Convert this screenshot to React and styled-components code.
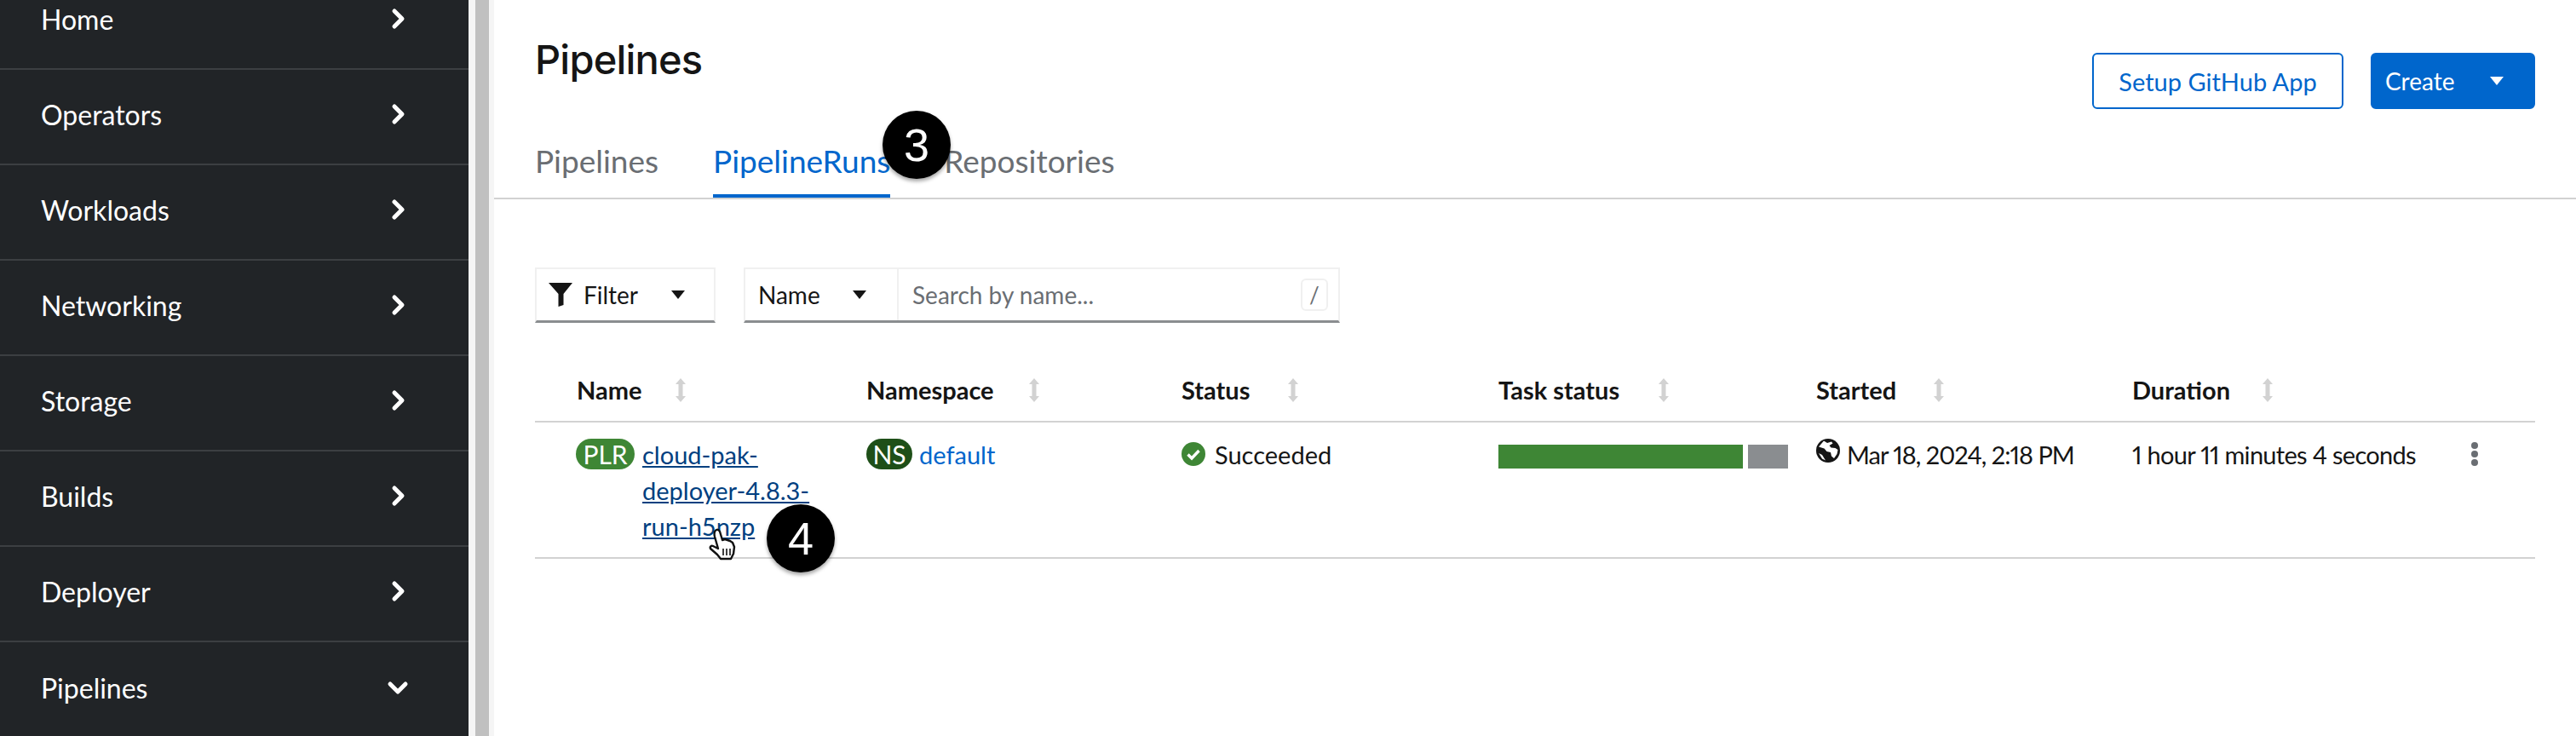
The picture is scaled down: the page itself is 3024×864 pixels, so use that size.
import styled, { createGlobalStyle } from "styled-components"

const GlobalStyle = createGlobalStyle`
  html, body {
    margin: 0;
    padding: 0;
    background: #fff;
  }
  * {
    box-sizing: border-box;
  }
`

const Page = styled.div`
  position: relative;
  display: flex;
  width: 3024px;
  height: 864px;
  overflow: hidden;
  background: #fff;
  font-family: "Lato", "Liberation Sans", sans-serif;
  color: #151515;
`

const Sidebar = styled.nav`
  flex: 0 0 550px;
  height: 864px;
  overflow: hidden;
  background: #212427;
`

const NavList = styled.ul`
  list-style: none;
  margin: -30px 0 0;
  padding: 0;
`

const NavItem = styled.li`
  display: flex;
  align-items: center;
  justify-content: space-between;
  height: 112px;
  padding: 0 70px 6px 48px;
  border-bottom: 2px solid #3c3f42;
  color: #fff;
  font-size: 32px;

  &:last-child {
    border-bottom: 0;
  }
`

const Gutter = styled.div`
  flex: 0 0 30px;
  display: flex;
  background: #f5f5f5;
  padding-left: 8px;

  &::before {
    content: "";
    width: 16px;
    background: #c0c0c0;
  }
`

const Main = styled.main`
  flex: 1;
  min-width: 0;
  background: #fff;
`

const Header = styled.header`
  display: flex;
  justify-content: space-between;
  align-items: flex-start;
  height: 130px;
  padding: 0 48px;
`

const Title = styled.h1`
  margin: 42px 0 0;
  font-family: "Inter", "Liberation Sans", sans-serif;
  font-size: 47px;
  line-height: 56px;
  font-weight: 500;
  letter-spacing: -0.8px;
  color: #151515;
`

const Actions = styled.div`
  display: flex;
  gap: 32px;
  margin-top: 62px;
`

const Button = styled.button`
  display: flex;
  align-items: center;
  height: 66px;
  border-radius: 6px;
  font: inherit;
  font-size: ${(p) => (p.$primary ? "28px" : "29px")};
  border: 2px solid #06c;
  background: ${(p) => (p.$primary ? "#06c" : "#fff")};
  color: ${(p) => (p.$primary ? "#fff" : "#06c")};
  width: ${(p) => (p.$primary ? "193px" : "295px")};
  padding: ${(p) => (p.$primary ? "0 0 0 15px" : "0")};
  justify-content: ${(p) => (p.$primary ? "flex-start" : "center")};
  gap: 40px;
`

const Tabs = styled.div`
  display: flex;
  height: 104px;
  padding-left: 48px;
  border-bottom: 2px solid #d2d2d2;
`

const Tab = styled.div`
  height: 102px;
  display: flex;
  align-items: center;
  padding-top: 18px;
  font-size: 37px;
  margin-right: ${(p) => p.$gap}px;
  color: ${(p) => (p.$active ? "#06c" : "#6a6e73")};
  border-bottom: 4px solid ${(p) => (p.$active ? "#06c" : "transparent")};
`

const Toolbar = styled.div`
  display: flex;
  gap: 33px;
  margin: 80px 0 0 48px;
  height: 65px;
`

const FieldGroup = styled.div`
  display: flex;
  height: 65px;
  border: 2px solid #f0f0f0;
  border-bottom: 3px solid #8a8d90;
  font-size: 28px;
`

const FilterField = styled.div`
  display: flex;
  align-items: center;
  width: ${(p) => p.$width}px;
  padding-left: ${(p) => p.$pad}px;
  gap: ${(p) => p.$gap}px;
`

const NameSelect = styled(FilterField)`
  border-right: 2px solid #f0f0f0;
  justify-content: flex-start;
`

const CaretSpacer = styled.span`
  width: 12px;
`

const SearchField = styled.div`
  display: flex;
  align-items: center;
  justify-content: space-between;
  width: 516px;
  padding: 0 12px 0 16px;
  color: #6a6e73;
`

const Kbd = styled.span`
  display: flex;
  align-items: center;
  justify-content: center;
  width: 32px;
  height: 38px;
  border: 2px solid #f0f0f0;
  border-radius: 6px;
  color: #6a6e73;
  font-size: 26px;
`

const Table = styled.div`
  display: grid;
  grid-template-columns: 389px 370px 372px 373px 371px 380px 93px;
  margin: 46px 48px 0;
`

const HeadCell = styled.div`
  display: flex;
  align-items: center;
  height: 71px;
  padding-left: ${(p) => p.$pad || 0}px;
  padding-bottom: 4px;
  border-bottom: 2px solid #d2d2d2;
  font-size: 29px;
  font-weight: 700;
  gap: ${(p) => p.$gap}px;
`

const Cell = styled.div`
  height: 160px;
  padding-top: 17px;
  padding-left: ${(p) => p.$pad || 0}px;
  border-bottom: 2px solid #d2d2d2;
  font-size: 29px;
  line-height: 42px;
  display: flex;
  align-items: flex-start;
  gap: ${(p) => p.$gap || 0}px;
`

const Tag = styled.span`
  flex: none;
  display: inline-flex;
  align-items: center;
  justify-content: center;
  height: 36px;
  margin-top: 2px;
  width: ${(p) => p.$width}px;
  border-radius: 18px;
  color: #fff;
  font-size: 30px;
  line-height: 36px;
  background: ${(p) => p.$color};
`

const RunLink = styled.a`
  width: 220px;
  color: #004080;
  text-decoration: underline;
`

const NamespaceLink = styled.a`
  color: #06c;
`

const NumericText = styled.span`
  font-variant-numeric: proportional-nums;
  letter-spacing: ${(p) => p.$spacing}px;
  white-space: nowrap;
`

const TaskBar = styled.div`
  display: flex;
  gap: 6px;
  width: 340px;
  height: 28px;
  margin-top: 9px;
`

const TaskSegment = styled.div`
  height: 28px;
  width: ${(p) => p.$width}px;
  background: ${(p) => p.$color};
`

const Marker = styled.div`
  position: absolute;
  left: ${(p) => p.$x}px;
  top: ${(p) => p.$y}px;
  width: 80px;
  height: 80px;
  border-radius: 50%;
  background: #000;
  color: #fff;
  display: flex;
  align-items: center;
  justify-content: center;
  font-family: "Liberation Sans", Arial, sans-serif;
  font-size: 54px;
  box-shadow: 0 3px 4px rgba(0, 0, 0, 0.35);
`

const HandCursor = styled.svg`
  position: absolute;
  left: 831px;
  top: 620px;
  width: 36px;
  height: 38px;
`

const Chevron = ({ down }) => (
  <svg width="26" height="26" viewBox="0 0 26 26" style={{ transform: down ? "rotate(90deg)" : "none" }}>
    <path d="M9 4l9 9-9 9" fill="none" stroke="#fff" strokeWidth="5" strokeLinecap="round" strokeLinejoin="round" />
  </svg>
)

const Caret = ({ color = "#151515" }) => (
  <svg width="18" height="12" viewBox="0 0 18 12">
    <path d="M1 1h16L9 11z" fill={color} />
  </svg>
)

const SortIcon = () => (
  <svg width="12" height="28" viewBox="0 0 12 28">
    <path d="M6 0l6 7H8.5v14H12l-6 7-6-7h3.5V7H0z" fill="#d2d2d2" />
  </svg>
)

const FilterIcon = () => (
  <svg width="28" height="28" viewBox="0 0 28 28">
    <path d="M0 0h28L17.5 13v13l-6 2V13z" fill="#151515" />
  </svg>
)

const CheckIcon = () => (
  <svg width="28" height="28" viewBox="0 0 28 28" style={{ marginTop: 6 }}>
    <circle cx="14" cy="14" r="14" fill="#3e8635" />
    <path d="M7.5 14.5l4.5 4.5 8.5-9" fill="none" stroke="#fff" strokeWidth="3.4" />
  </svg>
)

const GlobeIcon = () => (
  <svg width="28" height="28" viewBox="0 0 28 28" style={{ marginTop: 2, flex: "none" }}>
    <circle cx="14" cy="14" r="14" fill="#151515" />
    <path
      d="M9 2.5l4 2.5 5-1.5 1.5 2-4 2.5 2 2.5 5 .5 3 2-1 5-3.5 5-3-2.5-1-4.5-4.5-1-3-3.5L3 9.5zM3 17l4 2 4 6.5-4-2z"
      fill="#fff"
    />
  </svg>
)

const KebabIcon = () => (
  <svg width="8" height="28" viewBox="0 0 8 28" style={{ marginTop: 6 }}>
    <circle cx="4" cy="4" r="4" fill="#6a6e73" />
    <circle cx="4" cy="14" r="4" fill="#6a6e73" />
    <circle cx="4" cy="24" r="4" fill="#6a6e73" />
  </svg>
)

const navItems = ["Home", "Operators", "Workloads", "Networking", "Storage", "Builds", "Deployer", "Pipelines"]

const columns = [
  { label: "Name", pad: 49, gap: 40 },
  { label: "Namespace", gap: 41 },
  { label: "Status", gap: 45 },
  { label: "Task status", gap: 46 },
  { label: "Started", gap: 44 },
  { label: "Duration", gap: 38 },
]

export default function App() {
  return (
    <Page>
      <GlobalStyle />
      <Sidebar>
        <NavList>
          {navItems.map((item) => (
            <NavItem key={item}>
              {item}
              <Chevron down={item === "Pipelines"} />
            </NavItem>
          ))}
        </NavList>
      </Sidebar>
      <Gutter />
      <Main>
        <Header>
          <Title>Pipelines</Title>
          <Actions>
            <Button>Setup GitHub App</Button>
            <Button $primary>
              Create
              <Caret color="#fff" />
            </Button>
          </Actions>
        </Header>
        <Tabs>
          <Tab $gap={64}>Pipelines</Tab>
          <Tab $gap={63} $active>
            PipelineRuns
          </Tab>
          <Tab>Repositories</Tab>
        </Tabs>
        <Toolbar>
          <FieldGroup>
            <FilterField $width={208} $pad={14} $gap={13}>
              <FilterIcon />
              Filter
              <CaretSpacer />
              <Caret />
            </FilterField>
          </FieldGroup>
          <FieldGroup>
            <NameSelect $width={180} $pad={15} $gap={37}>
              Name
              <Caret />
            </NameSelect>
            <SearchField>
              Search by name...
              <Kbd>/</Kbd>
            </SearchField>
          </FieldGroup>
        </Toolbar>
        <Table>
          {columns.map((col) => (
            <HeadCell key={col.label} $pad={col.pad} $gap={col.gap}>
              {col.label}
              <SortIcon />
            </HeadCell>
          ))}
          <HeadCell />
          <Cell $pad={48} $gap={9}>
            <Tag $width={69} $color="#3e8635">
              PLR
            </Tag>
            <RunLink>cloud-pak-deployer-4.8.3-run-h5nzp</RunLink>
          </Cell>
          <Cell $gap={8}>
            <Tag $width={54} $color="#1e4f18">
              NS
            </Tag>
            <NamespaceLink>default</NamespaceLink>
          </Cell>
          <Cell $gap={11}>
            <CheckIcon />
            Succeeded
          </Cell>
          <Cell>
            <TaskBar>
              <TaskSegment $width={287} $color="#3e8635" />
              <TaskSegment $width={47} $color="#8a8d90" />
            </TaskBar>
          </Cell>
          <Cell $gap={8}>
            <GlobeIcon />
            <NumericText $spacing={-1}>Mar 18, 2024, 2:18 PM</NumericText>
          </Cell>
          <Cell>
            <NumericText $spacing={-0.7}>1 hour 11 minutes 4 seconds</NumericText>
          </Cell>
          <Cell $pad={18}>
            <KebabIcon />
          </Cell>
        </Table>
      </Main>
      <Marker $x={1036} $y={130}>
        3
      </Marker>
      <Marker $x={900} $y={592}>
        4
      </Marker>
      <HandCursor viewBox="0 0 36 38">
        <path
          d="M10 2c2-1 3 0 4 2l3 10 3-1 3 1 3 1 3 2 2 5-1 8-3 6H15l-4-5-8-7c-1-2 1-4 3-3l6 3-4-14c-1-4 0-7 2-8z"
          fill="#fff"
          stroke="#111"
          strokeWidth="2.4"
          strokeLinejoin="round"
        />
        <path d="M18 24v8M22 24v8M26 24v8" stroke="#111" strokeWidth="1.6" />
      </HandCursor>
    </Page>
  )
}
